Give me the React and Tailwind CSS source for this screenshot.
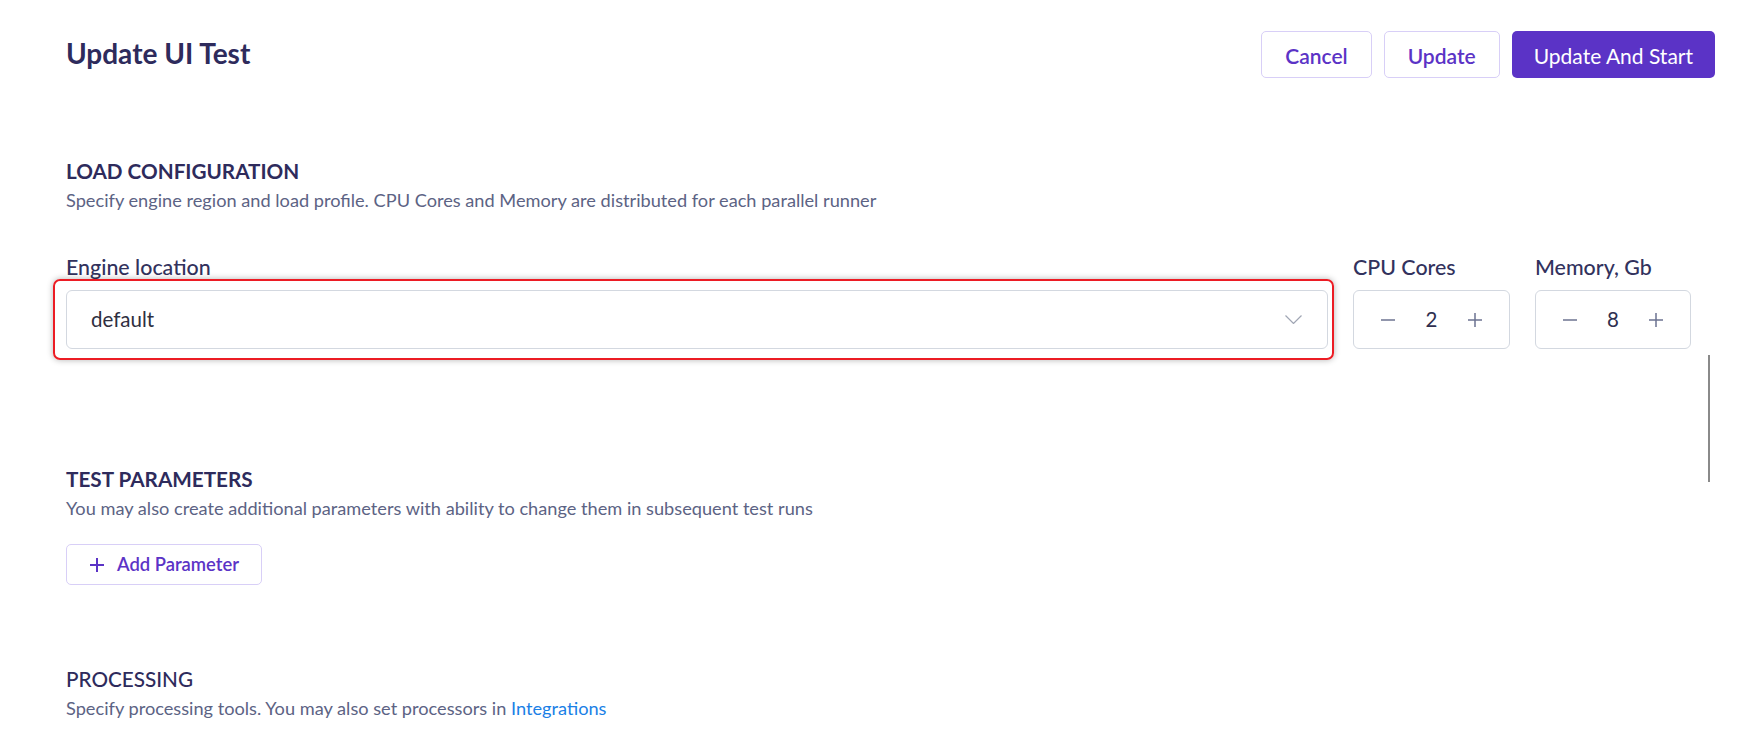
import React from "react";

const FONT = "font-['Lato','Liberation_Sans',sans-serif]";

function Stepper({ value }) {
  return (
    <div className="flex h-[59px] items-center justify-between rounded-md border border-[#d3d8e0] px-[26px] text-[#6c7391]">
      <svg width="16" height="16" viewBox="0 0 16 16" fill="none">
        <path d="M1 8h14" stroke="currentColor" strokeWidth="1.5" />
      </svg>
      <span className="text-[20.5px] text-[#2f2f4f]">{value}</span>
      <svg width="16" height="16" viewBox="0 0 16 16" fill="none">
        <path d="M1 8h14M8 1v14" stroke="currentColor" strokeWidth="1.5" />
      </svg>
    </div>
  );
}

function Field({ label, className, children }) {
  return (
    <div className={className}>
      <div className="text-[21.4px] leading-[28px] font-medium text-[#32325d]">{label}</div>
      <div className="relative mt-[9px]">{children}</div>
    </div>
  );
}

function SectionHead({ title, weight = "font-bold", children }) {
  return (
    <>
      <h2 className={`text-[20.7px] leading-[28px] uppercase text-[#2e2b5c] ${weight}`}>{title}</h2>
      <p className="mt-[2px] text-[18.2px] leading-[26px] text-[#5c6384]">{children}</p>
    </>
  );
}

export default function App() {
  return (
    <div className={`relative h-[740px] overflow-hidden bg-white ${FONT}`}>
      <header className="flex items-start justify-between pl-[66px] pr-[30px] pt-[31px]">
        <h1 className="mt-[2px] text-[28px] leading-[40px] font-bold text-[#2e2b5c]">Update UI Test</h1>
        <div className="flex gap-[12px]">
          <button className="h-[47px] rounded-[5px] border border-[#d8cff7] px-[23px] pt-[2px] text-[21px] font-semibold text-[#5b33c6]">
            Cancel
          </button>
          <button className="h-[47px] rounded-[5px] border border-[#d8cff7] px-[23px] pt-[2px] text-[21px] font-semibold text-[#5b33c6]">
            Update
          </button>
          <button className="h-[47px] rounded-[5px] bg-[#5b33c6] px-[22px] pt-[2px] text-[21px] text-white">
            Update And Start
          </button>
        </div>
      </header>

      {/* scrollbar thumb */}
      <div className="absolute right-[35px] top-[355px] h-[127px] w-[2px] bg-[#8a8a8a]" />

      <main className="pl-[66px] pr-[54px]">
        <section className="mt-[79px]">
          <SectionHead title="Load Configuration">
            Specify engine region and load profile. CPU Cores and Memory are distributed for each parallel runner
          </SectionHead>
          <div className="mt-[40px] flex gap-[25px]">
            <Field label="Engine location" className="flex-1">
              <div className="flex h-[59px] items-center justify-between rounded-md border border-[#d3d8e0] pl-[24px] pr-[25px]">
                <span className="text-[20.5px] text-[#2f2f3f]">default</span>
                <svg width="17" height="9" viewBox="0 0 17 9" fill="none">
                  <path d="M0.5 0.5l8 8 8-8" stroke="#a0a6b4" strokeWidth="1.2" />
                </svg>
              </div>
              <div className="pointer-events-none absolute -bottom-[11px] -left-[13px] -right-[6px] -top-[11px] rounded-[7px] border-2 border-[#ec1c24] shadow-[0_0_6px_rgba(0,0,0,0.3)]" />
            </Field>
            <Field label="CPU Cores" className="w-[157px]">
              <Stepper value="2" />
            </Field>
            <Field label="Memory, Gb" className="w-[156px]">
              <Stepper value="8" />
            </Field>
          </div>
        </section>

        <section className="mt-[116px]">
          <SectionHead title="Test Parameters">
            You may also create additional parameters with ability to change them in subsequent test runs
          </SectionHead>
          <button className="mt-[23px] flex h-[41px] items-center gap-[13px] rounded-[5px] border border-[#d8cff7] pl-[23px] pr-[22px] text-[18.4px] font-semibold text-[#5b33c6]">
            <svg width="14" height="14" viewBox="0 0 14 14" fill="none">
              <path d="M0 7h14M7 0v14" stroke="currentColor" strokeWidth="2" />
            </svg>
            Add Parameter
          </button>
        </section>

        <section className="mt-[80px]">
          <SectionHead title="Processing" weight="font-medium">
            Specify processing tools. You may also set processors in{" "}
            <a className="text-[#1a80e6]">Integrations</a>
          </SectionHead>
        </section>
      </main>
    </div>
  );
}
